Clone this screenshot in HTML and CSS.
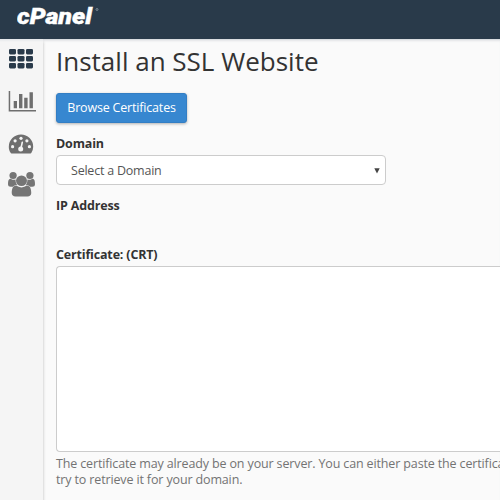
FILE: index.html
```html
<!DOCTYPE html>
<html lang="en">
<head>
<meta charset="utf-8">
<title>Install an SSL Website</title>
<link rel="stylesheet" href="styles.css">
</head>
<body>
<header class="topbar">
  <svg class="logo" width="90" height="32" viewBox="0 0 90 32" role="img" aria-label="cPanel">
    <text class="logo-text" x="0" y="24" textLength="75" lengthAdjust="spacingAndGlyphs">cPanel</text>
    <circle cx="80" cy="9.5" r="1" fill="none" stroke="#9ba6b1" stroke-width=".7"/>
  </svg>
</header>
<div class="shell">
  <nav class="sidebar">
    <svg width="26" height="20" viewBox="0 0 26 20" fill="#293a4a">
      <rect x="1" width="7" height="5.4" rx="1.3"/><rect x="9.5" width="7" height="5.4" rx="1.3"/><rect x="18" width="7" height="5.4" rx="1.3"/>
      <rect x="1" y="7" width="7" height="5.4" rx="1.3"/><rect x="9.5" y="7" width="7" height="5.4" rx="1.3"/><rect x="18" y="7" width="7" height="5.4" rx="1.3"/>
      <rect x="1" y="14" width="7" height="5.4" rx="1.3"/><rect x="9.5" y="14" width="7" height="5.4" rx="1.3"/><rect x="18" y="14" width="7" height="5.4" rx="1.3"/>
    </svg>
    <svg class="chart" width="28" height="21" viewBox="0 0 28 21" fill="#6f6f6f">
      <path d="M.7 0h1.500v18.900H28v1.500H.7zM5.700 10h3.300v7.200H5.700zM11 3h3.400v14.200H11zM16.200 6.800h3.400v10.400h-3.400zM21.500 1.300h3.400v15.900h-3.400z"/>
    </svg>
    <svg class="gauge" width="26" height="20" viewBox="0 0 26 20">
      <path fill="#6f6f6f" d="M13 .5A12.2 12.2 0 0 0 .8 12.7c0 2.2.6 4.3 1.800 6.100.2.4.5.6 1 .6h18.800c.5 0 .8-.2 1-.6a12 12 0 0 0 1.800-6.100A12.200 12.200 0 0 0 13 .5z"/>
      <g fill="#f5f5f5"><circle cx="4.600" cy="12.700" r="1.600"/><circle cx="7.100" cy="6.800" r="1.600"/><circle cx="13" cy="4.300" r="1.600"/><circle cx="18.900" cy="6.800" r="1.600"/><circle cx="21.400" cy="12.700" r="1.600"/><circle cx="12.700" cy="15" r="2.500"/></g>
      <path d="M12.900 14.500l1.400-6.200" stroke="#f5f5f5" stroke-width="1.600" stroke-linecap="round"/>
    </svg>
    <svg class="users" width="27" height="25" viewBox="0 0 26 25" preserveAspectRatio="none" fill="#757575">
      <circle cx="4.900" cy="3.600" r="3.500"/><circle cx="21.100" cy="3.600" r="3.500"/>
      <path d="M0 12.300C0 9 .5 6.700 2.300 6.700c.4 0 1.500 1.100 3.200 1.100.6 0 1.200-.1 1.800-.3-.1 2.300.4 4 1.500 5.500-1.700 0-3.100.6-4.100 1.800H2.600C1 14.800 0 14 0 12.300zM26 12.300c0-3.300-.5-5.600-2.300-5.600-.4 0-1.500 1.100-3.200 1.100-.6 0-1.200-.1-1.800-.3.1 2.300-.4 4-1.500 5.500 1.700 0 3.100.6 4.100 1.800h2.100c1.600 0 2.600-.8 2.600-2.500z"/>
      <circle cx="13" cy="8.800" r="5.300"/>
      <path d="M3.600 21c0-3.700.9-7.400 4.400-7.400.5 0 2.200 1.900 5 1.900s4.500-1.900 5-1.900c3.500 0 4.400 3.700 4.400 7.400 0 2.200-1.500 3.500-3.600 3.500H7.200c-2.100 0-3.600-1.300-3.600-3.500z"/>
    </svg>
  </nav>
  <main class="content">
    <h1>Install an SSL Website</h1>
    <button class="browse" type="button">Browse Certificates</button>
    <div class="label">Domain</div>
    <div class="select"><span>Select a Domain</span><svg width="6" height="6" viewBox="0 0 6 6"><path d="M.3.3h5.400L3 5.500z" fill="#444"/></svg></div>
    <div class="label ip">IP Address</div>
    <div class="label cert">Certificate: (CRT)</div>
    <div class="crt"></div>
    <p class="help">The certificate may already be on your server. You can either paste the certifica<br>try to retrieve it for your domain.</p>
  </main>
</div>
</body>
</html>
```
FILE: styles.css
```css
* { box-sizing: border-box; }
body {
  margin: 0;
  height: 500px;
  overflow: hidden;
  background: #fafafa;
  color: #333;
  font: 13px/18px "Open Sans", sans-serif;
}
.topbar {
  height: 39px;
  padding-left: 17px;
  background: #293a4a;
}
.logo { display: block; }
.logo-text {
  font: italic 900 22.5px "Roboto", sans-serif;
  fill: #fff;
  stroke: #fff;
  stroke-width: .4px;
}
.shell { display: flex; height: 461px; box-shadow: inset 0 3px 3px -2px #c8cdd2; }
.sidebar {
  flex: none;
  display: flex;
  flex-direction: column;
  width: 43px;
  padding: 10px 0 0 8px;
  background: linear-gradient(#e3e6e9, #f5f5f5 3px);
  box-shadow: 0 3px 3px #bbb;
}
.chart { margin-top: 22px; }
.gauge { margin-top: 22px; }
.users { margin-top: 18px; }
.content { flex: 1; min-width: 0; padding-left: 13px; }
h1 {
  margin: 5px 0 14px;
  font-size: 26px;
  line-height: 35px;
  font-weight: 400;
}
.browse {
  display: block;
  width: 131px;
  height: 30px;
  padding: 0;
  border: 1px solid #337ec4;
  border-radius: 3px;
  background: #3787d0;
  box-shadow: 0 1px 3px rgba(0, 0, 0, .3);
  color: #fff;
  font: 12.5px/18px "Open Sans", sans-serif;
  letter-spacing: -.18px;
}
.label {
  margin-top: 12px;
  font-size: 12.5px;
  font-weight: 700;
  letter-spacing: -.17px;
}
.select {
  display: flex;
  align-items: center;
  justify-content: space-between;
  width: 330px;
  height: 30px;
  margin-top: 2px;
  padding: 1px 5px 0 14px;
  border: 1px solid #ccc;
  border-radius: 4px;
  background: #fff;
  color: #555;
  font-size: 12.5px;
  letter-spacing: -.22px;
}
.cert { margin-top: 31px; }
.crt {
  height: 186px;
  margin-top: 2px;
  border: 1px solid #ccc;
  border-right: 0;
  border-radius: 4px 0 0 4px;
  background: #fff;
}
.help {
  margin: 4px 0 0;
  color: #737373;
  font-size: 12.5px;
  line-height: 16px;
  letter-spacing: -.14px;
  white-space: nowrap;
}
```
